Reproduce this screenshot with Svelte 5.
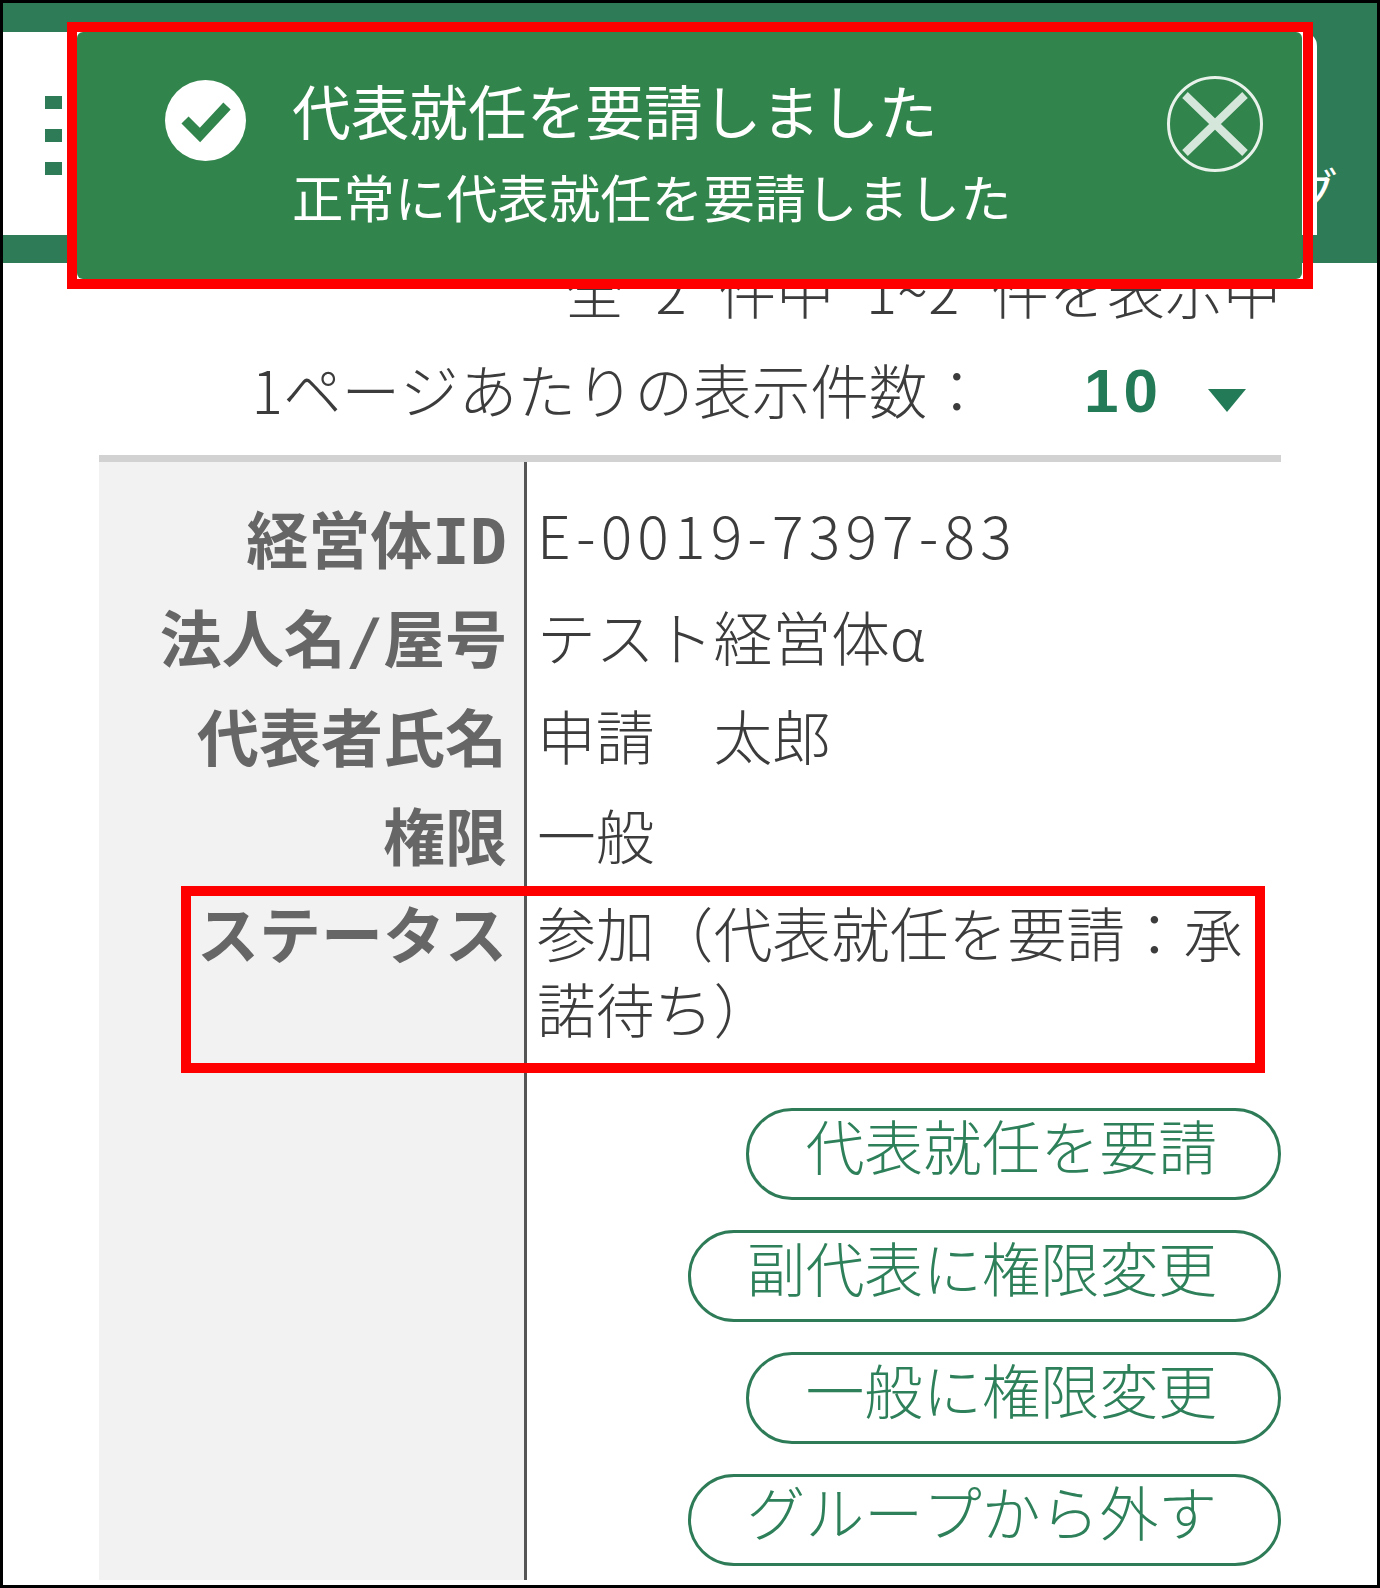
<script>
	const rows = [
		{ label: '経営体ID', value: 'E-0019-7397-83', id: true },
		{ label: '法人名/屋号', value: 'テスト経営体α' },
		{ label: '代表者氏名', value: '申請　太郎' },
		{ label: '権限', value: '一般' },
		{ label: 'ステータス', value: '参加（代表就任を要請：承諾待ち）', status: true }
	];
	const actions = ['代表就任を要請', '副代表に権限変更', '一般に権限変更', 'グループから外す'];
</script>

<div class="frame">
	<header class="header">
		<div class="panel">
			<div class="menu"><i></i><i></i><i></i></div>
		</div>
		<span class="fragment">グ</span>
	</header>

	<main class="content">
		<p class="count">全 2 件中 1~2 件を表示中</p>
		<div class="per-page">
			<span>1ページあたりの表示件数：</span>
			<span class="select">10</span>
			<span class="caret"></span>
		</div>

		<div class="table">
			{#each rows as row}
				<div class="row" class:status={row.status}>
					<div class="label">{row.label}</div>
					<div class="value" class:id={row.id}>{row.value}</div>
				</div>
			{/each}
			<div class="row">
				<div class="label"></div>
				<div class="value actions">
					{#each actions as action}
						<button type="button">{action}</button>
					{/each}
				</div>
			</div>
		</div>
	</main>

	<div class="toast">
		<svg class="check" viewBox="0 0 81 81">
			<circle cx="40.5" cy="40.5" r="40.5" fill="#fff" />
			<path d="M20 40 L35 55 L62 26" fill="none" stroke="#31854c" stroke-width="10" />
		</svg>
		<div class="message">
			<div class="title">代表就任を要請しました</div>
			<div class="sub">正常に代表就任を要請しました</div>
		</div>
		<svg class="close" viewBox="0 0 96 96">
			<circle cx="48" cy="48" r="46.5" fill="none" stroke="#e8f2ea" stroke-width="3" />
			<path d="M18 19 L78 77 M78 19 L18 77" fill="none" stroke="#d5e7da" stroke-width="8" />
		</svg>
	</div>

	<div class="mark mark-toast"></div>
	<div class="mark mark-status"></div>
</div>

<style>
	:global(body) {
		margin: 0;
		background: #fff;
	}

	.frame {
		position: relative;
		box-sizing: border-box;
		width: 1380px;
		height: 1588px;
		border: 3px solid #000;
		overflow: hidden;
		background: #fff;
		font-family: "Noto Sans CJK JP", "Noto Sans", sans-serif;
		font-weight: 300;
		font-kerning: none;
		color: #3c3c3c;
	}

	.header {
		display: flex;
		align-items: flex-start;
		height: 260px;
		background: #2d7b57;
	}

	.panel {
		flex: none;
		box-sizing: border-box;
		width: 1314px;
		height: 203px;
		margin-top: 29px;
		padding: 64px 0 0 42px;
		background: #fff;
		border-top-right-radius: 14px;
	}

	.menu {
		display: flex;
		flex-direction: column;
		gap: 20px;
	}

	.menu i {
		display: block;
		width: 17px;
		height: 13px;
		background: #2d7b57;
	}

	.fragment {
		margin: 154px 0 0 -27px;
		color: #fff;
		font-size: 48px;
		font-weight: 400;
		line-height: 60px;
	}

	.content {
		padding: 0 96px;
	}

	.count {
		margin: 0;
		font-size: 58px;
		line-height: 52px;
		text-align: right;
		white-space: nowrap;
		word-spacing: 19px;
	}

	.per-page {
		display: flex;
		align-items: center;
		margin-top: 33px;
		padding-bottom: 26px;
		font-size: 58.6px;
		line-height: 77px;
		white-space: nowrap;
		justify-content: flex-end;
		border-bottom: 7px solid #d2d2d2;
	}

	.select {
		margin: 4px 0 0 98px;
		font-family: "Liberation Sans", sans-serif;
		font-size: 62px;
		font-weight: 700;
		letter-spacing: 5px;
		color: #237a57;
	}

	.caret {
		width: 0;
		height: 0;
		margin: 24px 35px 0 45px;
		border-style: solid;
		border-width: 23px 19px 0;
		border-color: #237a57 transparent transparent;
	}

	.table {
		font-size: 58.8px;
		line-height: 77px;
	}

	.row {
		display: grid;
		grid-template-columns: 425px 1fr;
	}

	.status {
		line-height: 76px;
	}

	.label {
		box-sizing: border-box;
		padding: 6px 17px 16px 0;
		background: #f2f2f2;
		font-family: "DejaVu Sans Mono", "Noto Sans CJK JP", monospace;
		font-size: 62px;
		font-weight: 700;
		color: #666;
		text-align: right;
		white-space: nowrap;
	}

	.value {
		padding: 0 0 22px 10px;
		border-left: 3px solid #555;
	}

	.row:first-child .label {
		padding-top: 42px;
	}

	.row:first-child .value {
		padding-top: 33px;
		padding-bottom: 25px;
		letter-spacing: 5.2px;
	}

	.actions {
		display: flex;
		flex-direction: column;
		align-items: flex-end;
		gap: 30px;
		padding-top: 40px;
		padding-bottom: 14px;
	}

	button {
		box-sizing: border-box;
		height: 92px;
		padding: 0 61px 19px 56px;
		border: 3px solid #2d7b57;
		border-radius: 46px;
		background: #fff;
		color: #2d8059;
		font: inherit;
		line-height: 50px;
		font-kerning: none;
		white-space: nowrap;
	}

	.toast {
		position: absolute;
		left: 74px;
		top: 29px;
		display: flex;
		align-items: flex-start;
		width: 1225px;
		height: 247px;
		border-radius: 6px;
		background: #31854c;
		color: #fff;
		font-weight: 400;
	}

	.check {
		flex: none;
		width: 81px;
		height: 81px;
		margin: 48px 0 0 88px;
	}

	.message {
		flex: 1;
		margin: 33px 0 0 46px;
	}

	.title {
		font-size: 58.7px;
		line-height: 89px;
		white-space: nowrap;
	}

	.sub {
		font-size: 51.4px;
		line-height: 83px;
		white-space: nowrap;
	}

	.close {
		flex: none;
		width: 96px;
		height: 96px;
		margin: 44px 39px 0 0;
	}

	.mark {
		position: absolute;
		box-sizing: border-box;
		border: 10px solid #f00;
	}

	.mark-toast {
		left: 64px;
		top: 19px;
		width: 1246px;
		height: 267px;
	}

	.mark-status {
		left: 178px;
		top: 883px;
		width: 1084px;
		height: 187px;
	}
</style>
